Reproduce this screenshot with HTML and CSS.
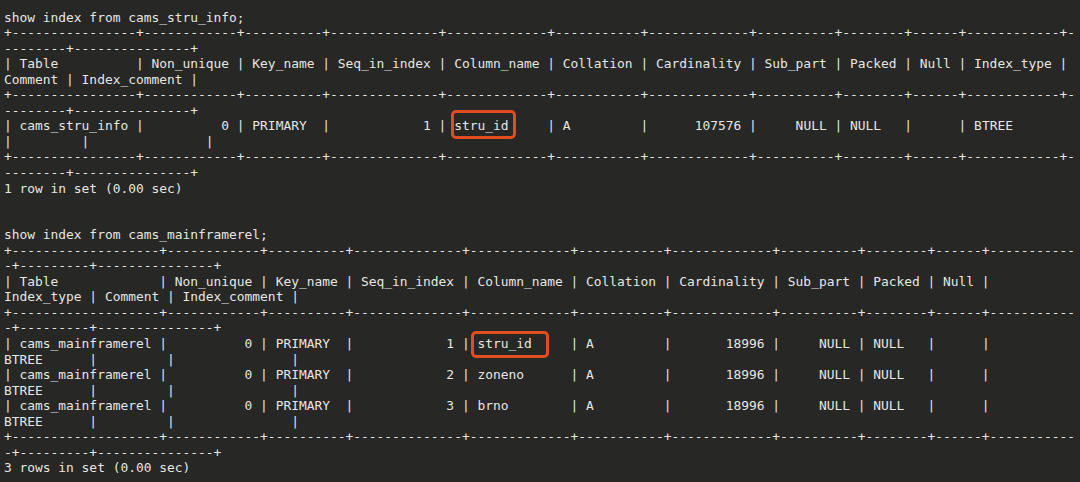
FILE: index.html
```html
<!DOCTYPE html>
<html lang="en">
<head>
<meta charset="UTF-8" />
<meta name="viewport" content="width=device-width, initial-scale=1" />
<title>show index</title>
<link rel="stylesheet" href="styles.css">
</head>
<body>

<pre class="term">show index from cams_stru_info;
+----------------+------------+----------+--------------+-------------+-----------+-------------+----------+--------+------+------------+-
--------+---------------+
| Table          | Non_unique | Key_name | Seq_in_index | Column_name | Collation | Cardinality | Sub_part | Packed | Null | Index_type |
Comment | Index_comment |
+----------------+------------+----------+--------------+-------------+-----------+-------------+----------+--------+------+------------+-
--------+---------------+
| cams_stru_info |          0 | PRIMARY  |            1 | <span class="mark mark-one">stru_id</span>     | A         |      107576 |     NULL | NULL   |      | BTREE
|         |               |
+----------------+------------+----------+--------------+-------------+-----------+-------------+----------+--------+------+------------+-
--------+---------------+
1 row in set (0.00 sec)


show index from cams_mainframerel;
+-------------------+------------+----------+--------------+-------------+-----------+-------------+----------+--------+------+-----------
-+---------+---------------+
| Table             | Non_unique | Key_name | Seq_in_index | Column_name | Collation | Cardinality | Sub_part | Packed | Null |
Index_type | Comment | Index_comment |
+-------------------+------------+----------+--------------+-------------+-----------+-------------+----------+--------+------+-----------
-+---------+---------------+
| cams_mainframerel |          0 | PRIMARY  |            1 | <span class="mark mark-two">stru_id</span>     | A         |       18996 |     NULL | NULL   |      |
BTREE      |         |               |
| cams_mainframerel |          0 | PRIMARY  |            2 | zoneno      | A         |       18996 |     NULL | NULL   |      |
BTREE      |         |               |
| cams_mainframerel |          0 | PRIMARY  |            3 | brno        | A         |       18996 |     NULL | NULL   |      |
BTREE      |         |               |
+-------------------+------------+----------+--------------+-------------+-----------+-------------+----------+--------+------+-----------
-+---------+---------------+
3 rows in set (0.00 sec)</pre>

</body>
</html>
```

FILE: styles.css
```css
/* Reset */
*, *::before, *::after {
  margin: 0; padding: 0; box-sizing: border-box;
}
html, body {
  height: 100%;
  background-color: #272725;
  color: #e6e6e4;
  overflow: hidden;
}

.term {
  font-family: 'DejaVu Sans Mono', 'Liberation Mono', monospace;
  font-size: 12.9px;
  line-height: 15.55px;
  white-space: pre;
  padding: 9.5px 0 0 4px;
}

/* orange highlight round a value */
.mark {
  position: relative;
}
.mark::after {
  content: "";
  position: absolute;
  border: 3px solid #e24d1f;
  border-radius: 5px;
}
.mark-one::after {
  left: -3px;
  right: -8px;
  top: -8px;
  bottom: -6px;
}
.mark-two::after {
  left: -6px;
  right: -17px;
  top: -5px;
  bottom: -7px;
}
```
